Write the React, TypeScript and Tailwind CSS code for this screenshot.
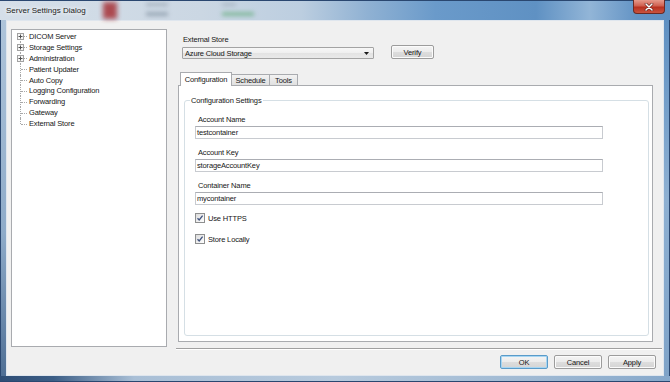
import React from "react";

const font = "font-['Liberation_Sans',Arial,sans-serif]";

function TreeRow({ label, expandable, pos }: { label: string; expandable?: boolean; pos: "first" | "mid" | "last" }) {
  const vClass =
    pos === "first"
      ? "absolute left-[8px] top-1/2 bottom-0 w-0 border-l border-dotted border-[#a8a8a8]"
      : pos === "last"
      ? "absolute left-[8px] top-0 h-1/2 w-0 border-l border-dotted border-[#a8a8a8]"
      : "absolute left-[8px] top-0 bottom-0 w-0 border-l border-dotted border-[#a8a8a8]";
  return (
    <div className="flex items-center h-[10.9px]">
      <div className="relative w-[17px] h-full shrink-0">
        <div className={vClass} />
        <div className="absolute left-[9px] right-[2px] top-1/2 h-0 border-t border-dotted border-[#a8a8a8]" />
        {expandable && (
          <div className="absolute left-[5px] top-[2px] w-[7px] h-[7px] border border-[#a2a2a2] bg-[#f7f7f7] flex items-center justify-center">
            <svg width="5" height="5" viewBox="0 0 5 5" className="block">
              <path d="M0.5 2.5H4.5M2.5 0.5V4.5" stroke="#505050" strokeWidth="1" />
            </svg>
          </div>
        )}
      </div>
      <span className="text-[7.5px] leading-[9px] tracking-[-0.15px] text-[#161616]">{label}</span>
    </div>
  );
}

function TextField({ label, value }: { label: string; value: string }) {
  return (
    <div className="flex flex-col">
      <div className="ml-[3px] h-[9px] leading-[9px] text-[7.5px] tracking-[-0.15px] text-[#161616]">{label}</div>
      <div className="mt-[2px] w-[408px] h-[13px] border border-[#c8cbd0] border-t-[#abadb3] bg-white flex items-center pl-[1px]">
        <span className="text-[7.5px] leading-[9px] tracking-[-0.15px] text-[#161616]">{value}</span>
      </div>
    </div>
  );
}

function CheckRow({ label, className }: { label: string; className: string }) {
  return (
    <div className={`flex items-center h-[10px] ${className}`}>
      <div className="w-[10px] h-[10px] border border-[#8e8f8f] bg-[linear-gradient(135deg,#dcdcdc,#ffffff)] flex items-center justify-center">
        <svg width="8" height="8" viewBox="0 0 8 8" className="block">
          <path d="M1.5 4.2 L3.2 6 L6.6 1.6" stroke="#40537f" strokeWidth="1.3" fill="none" />
        </svg>
      </div>
      <span className="ml-[3px] text-[7.5px] leading-[9px] tracking-[-0.15px] text-[#161616]">{label}</span>
    </div>
  );
}

function Btn({ label, primary, className }: { label: string; primary?: boolean; className?: string }) {
  return (
    <div
      className={`h-[14px] rounded-[2px] border ${
        primary ? "border-[#5a9bc9] shadow-[inset_0_0_0_1px_#a7d6f3]" : "border-[#9c9c9c] shadow-[inset_0_0_0_1px_#fbfbfb]"
      } bg-[linear-gradient(180deg,#f4f4f4_0%,#ebebeb_50%,#dddddd_51%,#d4d4d4_100%)] flex items-center justify-center ${className ?? ""}`}
    >
      <span className="text-[7.5px] leading-[9px] tracking-[-0.15px] text-[#161616]">{label}</span>
    </div>
  );
}

export default function App() {
  return (
    <div className={`relative w-[670px] h-[382px] flex flex-col overflow-hidden bg-[#7fa3c8] ${font}`}>
      {/* title bar */}
      <div className="relative h-[20px] shrink-0 border-t border-[#2a4770] bg-[linear-gradient(90deg,#d5dfe9_0%,#cbd7e3_30%,#bccee0_45%,#8fb1d3_55%,#6a9aca_65%,#5f91c3_80%,#92b5d7_88%,#6494c5_95%,#5d8fc2_100%)]">
        <div className="absolute left-[103px] top-[1px] w-[14px] h-[17px] bg-[#a83a40] blur-[2.5px] opacity-90" />
        <div className="absolute left-[146px] top-[2px] w-[22px] h-[3px] bg-[#7e8a96] blur-[2px] opacity-50" />
        <div className="absolute left-[146px] top-[11px] w-[22px] h-[4px] bg-[#68798a] blur-[2px] opacity-50" />
        <div className="absolute left-[222px] top-[2px] w-[14px] h-[3px] bg-[#7e8a96] blur-[2px] opacity-40" />
        <div className="absolute left-[222px] top-[11px] w-[32px] h-[4px] bg-[#5aa872] blur-[2px] opacity-60" />
        <div className="relative flex items-center h-full pl-[6px] pt-[1px]">
          <span className="text-[8px] leading-[10px] text-[#1b1b1b] [text-shadow:0_0_4px_#ffffff,0_0_6px_#ffffff]">Server Settings Dialog</span>
        </div>
        <div className="absolute right-[5px] top-[-1px] w-[32px] h-[14px] rounded-b-[4px] border border-[#6b2a24] border-t-0 bg-[linear-gradient(180deg,#e59a8c_0%,#d0604f_45%,#b8301f_55%,#c9543f_100%)] flex items-center justify-center">
          <svg width="10" height="8" viewBox="0 0 10 8" className="block">
            <path d="M2 1 L8 7 M8 1 L2 7" stroke="#5b1a14" strokeWidth="2.6" strokeLinecap="round" />
            <path d="M2 1 L8 7 M8 1 L2 7" stroke="#ffffff" strokeWidth="1.5" strokeLinecap="round" />
          </svg>
        </div>
      </div>

      {/* middle */}
      <div className="flex h-[356px] shrink-0">
        <div className="w-[6px] shrink-0 border-l border-[#2a4770] bg-[linear-gradient(180deg,#aec4da_0%,#8eabc9_60%,#4f6f95_100%)]" />
        <div className="w-[658px] shrink-0 bg-[#f0f0f0] border border-[#dfe6ee] flex flex-col">
          <div className="flex pt-[8px] pl-[4px]">
            {/* tree */}
            <div className="w-[156px] h-[318px] shrink-0 border border-[#a9abaf] bg-white pt-[1px]">
              <TreeRow label="DICOM Server" expandable pos="first" />
              <TreeRow label="Storage Settings" expandable pos="mid" />
              <TreeRow label="Administration" expandable pos="mid" />
              <TreeRow label="Patient Updater" pos="mid" />
              <TreeRow label="Auto Copy" pos="mid" />
              <TreeRow label="Logging Configuration" pos="mid" />
              <TreeRow label="Forwarding" pos="mid" />
              <TreeRow label="Gateway" pos="mid" />
              <TreeRow label="External Store" pos="last" />
            </div>

            {/* right column */}
            <div className="ml-[9px] w-[487px] flex flex-col">
              <div className="mt-[6px] ml-[7px] h-[9px] leading-[9px] text-[7.5px] tracking-[-0.15px] text-[#161616]">External Store</div>
              <div className="mt-[1px] flex items-start">
                <div className="ml-[6px] mt-[2px] w-[192px] h-[12px] border border-[#a3a3a3] rounded-[1px] bg-[linear-gradient(180deg,#f7f7f7_0%,#efefef_50%,#e3e3e3_51%,#e9e9e9_100%)] flex items-center pl-[2px] pr-[4px]">
                  <span className="flex-1 text-[7.5px] leading-[9px] tracking-[-0.15px] text-[#161616]">Azure Cloud Storage</span>
                  <svg width="5" height="3" viewBox="0 0 5 3" className="block">
                    <path d="M0 0H5L2.5 3Z" fill="#1a1a1a" />
                  </svg>
                </div>
                <Btn label="Verify" className="ml-[17px] w-[43px] h-[13px]" />
              </div>

              {/* tabs */}
              <div className="mt-[13px] ml-[4px] flex items-end h-[14px]">
                <div className="relative z-10 h-[14px] w-[52px] border border-b-0 border-[#a9abaf] bg-white flex items-start justify-center pt-[2px]">
                  <span className="text-[7.5px] leading-[9px] tracking-[-0.15px] text-[#161616]">Configuration</span>
                </div>
                <div className="mb-[1px] h-[11px] w-[38px] border border-l-0 border-b-0 border-[#a9abaf] bg-[linear-gradient(180deg,#f2f2f2,#e0e0e0)] flex items-center justify-center">
                  <span className="text-[7.5px] leading-[9px] tracking-[-0.15px] text-[#161616]">Schedule</span>
                </div>
                <div className="mb-[1px] h-[11px] w-[28px] border border-l-0 border-b-0 border-[#a9abaf] bg-[linear-gradient(180deg,#f2f2f2,#e0e0e0)] flex items-center justify-center">
                  <span className="text-[7.5px] leading-[9px] tracking-[-0.15px] text-[#161616]">Tools</span>
                </div>
              </div>
              <div className="-mt-[1px] ml-[2px] w-[475px] h-[257px] border border-[#a9abaf] bg-white">
                <fieldset className="mt-[10px] ml-[5px] w-[465px] h-[240px] border border-[#d5dfe5] rounded-[3px] pl-[10px]">
                  <legend className="ml-[-5px] px-[1px] text-[7.5px] leading-[9px] tracking-[-0.15px] text-[#161616]">Configuration Settings</legend>
                  <div className="mt-[10px] flex flex-col gap-[9px]">
                    <TextField label="Account Name" value="testcontainer" />
                    <TextField label="Account Key" value="storageAccountKey" />
                    <TextField label="Container Name" value="mycontainer" />
                  </div>
                  <CheckRow label="Use HTTPS" className="mt-[8px]" />
                  <CheckRow label="Store Locally" className="mt-[11px]" />
                </fieldset>
              </div>
            </div>
          </div>

          {/* separator */}
          <div className="mt-[1px] ml-[169px] w-[486px] h-[2px] border-t border-[#a0a0a0] border-b border-b-white" />

          {/* buttons */}
          <div className="mt-[5px] flex justify-end pr-[7px] gap-[6px]">
            <Btn label="OK" primary className="w-[48px]" />
            <Btn label="Cancel" className="w-[48px]" />
            <Btn label="Apply" className="w-[48px]" />
          </div>
        </div>
        <div className="w-[6px] shrink-0 border-r border-[#2a4770] bg-[linear-gradient(180deg,#5f90c2_0%,#8eb0d2_50%,#7fa3c8_100%)]" />
      </div>

      {/* bottom frame */}
      <div className="h-[6px] shrink-0 border-b border-[#2a4770] bg-[linear-gradient(90deg,#2e4d75_0%,#3c5e86_8%,#a9bfd6_20%,#b7cadd_50%,#9fb9d3_80%,#86a8cb_100%)]" />
    </div>
  );
}
